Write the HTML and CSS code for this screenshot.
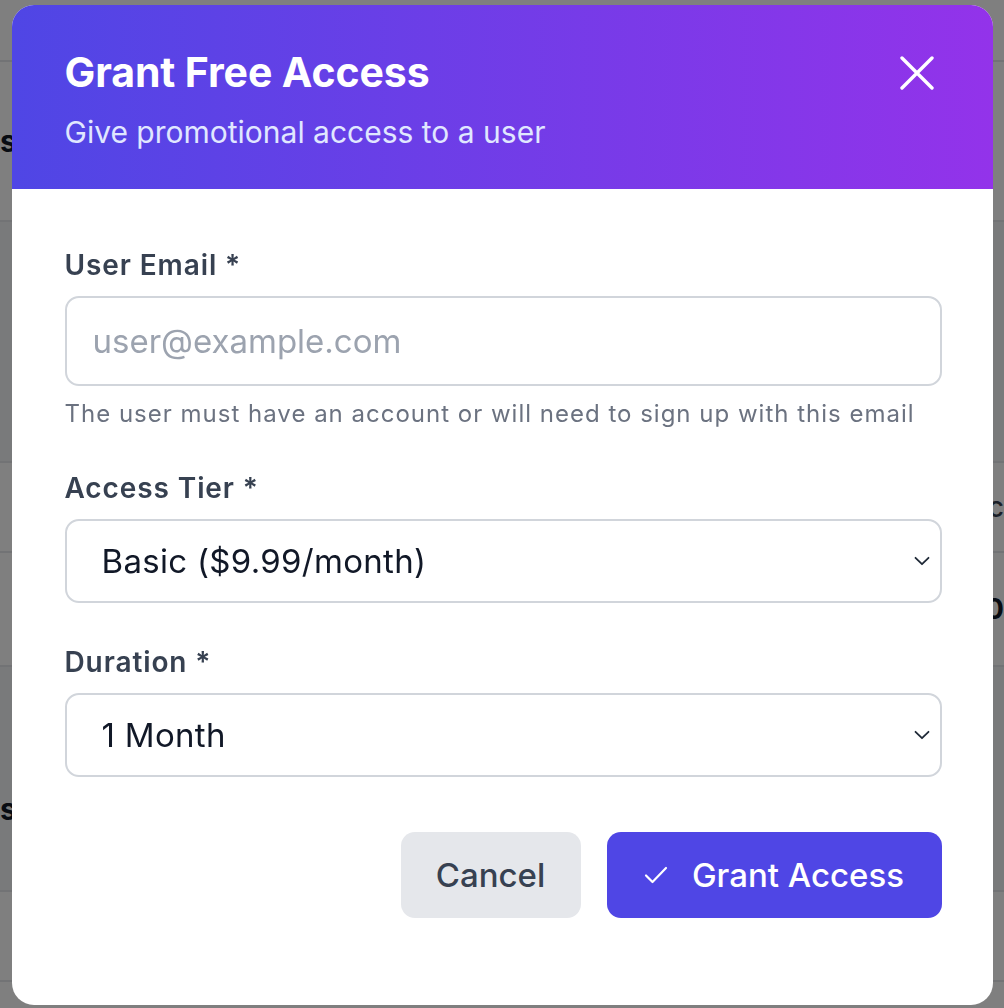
FILE: index.html
```html
<!DOCTYPE html>
<html lang="en">
<head>
<meta charset="utf-8">
<title>Grant Free Access</title>
<link rel="stylesheet" href="styles.css">
</head>
<body>
<div class="page">
  <div class="pg-top"></div>
  <div class="pg-row pg-tall"><span class="pg-l">s</span></div>
  <div class="pg-band pg-h241"></div>
  <div class="pg-row pg-h90"><span class="pg-r">c</span></div>
  <div class="pg-row pg-h114"><span class="pg-r pg-b">0</span></div>
  <div class="pg-band pg-h225"><span class="pg-l pg-lb">s</span></div>
  <div class="pg-row pg-h90"></div>
  <div class="pg-end"></div>
</div>

<div class="overlay">
  <div class="modal" role="dialog" aria-labelledby="mtitle">
    <div class="modal-head">
      <div class="head-text">
        <h2 id="mtitle" class="title">Grant Free Access</h2>
        <p class="subtitle">Give promotional access to a user</p>
      </div>
      <button class="close" aria-label="Close">
        <svg width="34" height="34" viewBox="0 0 34 34" fill="none" stroke="#fff" stroke-width="3.4" stroke-linecap="round"><path d="M2 2L32 32M32 2L2 32"/></svg>
      </button>
    </div>
    <form class="modal-body">
      <div class="field">
        <label class="label" for="email">User Email *</label>
        <input id="email" class="input" type="email" placeholder="user@example.com">
        <p class="help">The user must have an account or will need to sign up with this email</p>
      </div>
      <div class="field">
        <label class="label" for="tier">Access Tier *</label>
        <div class="select">
          <span class="select-val">Basic ($9.99/month)</span>
          <svg class="chev" width="16" height="10" viewBox="0 0 16 10" fill="none" stroke="#1f2937" stroke-width="1.8" stroke-linecap="round" stroke-linejoin="round"><path d="M1.5 1.8L8 8.2L14.5 1.8"/></svg>
        </div>
      </div>
      <div class="field">
        <label class="label" for="dur">Duration *</label>
        <div class="select">
          <span class="select-val">1 Month</span>
          <svg class="chev" width="16" height="10" viewBox="0 0 16 10" fill="none" stroke="#1f2937" stroke-width="1.8" stroke-linecap="round" stroke-linejoin="round"><path d="M1.5 1.8L8 8.2L14.5 1.8"/></svg>
        </div>
      </div>
      <div class="actions">
        <button type="button" class="btn btn-cancel">Cancel</button>
        <button type="button" class="btn btn-primary">
          <svg width="24" height="20" viewBox="0 0 24 20" fill="none" stroke="#fff" stroke-width="2.2" stroke-linecap="round" stroke-linejoin="round"><path d="M2 10.5L8.5 17L22 3"/></svg>
          <span>Grant Access</span>
        </button>
      </div>
    </form>
  </div>
</div>
</body>
</html>
```
FILE: styles.css
```css
* { box-sizing: border-box; }
html, body { margin: 0; padding: 0; }
body {
  width: 1004px;
  height: 1008px;
  overflow: hidden;
  font-family: Inter, "Noto Sans", "Liberation Sans", sans-serif;
  background: #ffffff;
}

/* underlying page (dimmed) */
.page { width: 1004px; height: 1008px; overflow: hidden; }
.pg-top { height: 62px; border-bottom: 2px solid #e5e7eb; }
.pg-row { border-bottom: 2px solid #e5e7eb; display: flex; align-items: center; justify-content: space-between; }
.pg-band { background: #f3f4f6; border-bottom: 2px solid #e5e7eb; display: flex; align-items: center; }
.pg-tall { height: 160px; }
.pg-h241 { height: 241px; }
.pg-h90 { height: 90px; }
.pg-h114 { height: 114px; }
.pg-h225 { height: 225px; }
.pg-end { height: 26px; }
.pg-l { font: 700 30px Inter, sans-serif; color: #111827; }
.pg-lb { margin-top: 60px; }
.pg-r { margin-left: auto; font: 500 28px Inter, sans-serif; color: #374151; }
.pg-b { color: #111827; font-weight: 700; }

.overlay {
  position: fixed;
  inset: 0;
  background: rgba(0, 0, 0, 0.5);
  display: flex;
  justify-content: center;
  align-items: flex-start;
  padding-top: 5px;
}

.modal {
  width: 981px;
  height: 1000px;
  background: #ffffff;
  border-radius: 22px;
  overflow: hidden;
  display: flex;
  flex-direction: column;
}

.modal-head {
  height: 184px;
  flex-shrink: 0;
  background: linear-gradient(90deg, #4f46e5 0%, #9333ea 100%);
  display: flex;
  justify-content: space-between;
  align-items: flex-start;
  padding: 43px 59px 0 53px;
}
.title {
  margin: 0;
  font-size: 41px;
  line-height: 48px;
  font-weight: 700;
  color: #ffffff;
  letter-spacing: -0.1px;
}
.subtitle {
  margin: 18px 0 0;
  font-size: 30px;
  line-height: 36px;
  color: #e0e7ff;
}
.close {
  margin-top: 8px;
  padding: 0;
  border: 0;
  background: transparent;
  width: 34px;
  height: 34px;
  display: flex;
}

.modal-body {
  margin: 0;
  padding: 58px 51px 0 53px;
  display: flex;
  flex-direction: column;
  gap: 41px;
}
.field { display: flex; flex-direction: column; }
.label {
  font-size: 28px;
  line-height: 36px;
  font-weight: 600;
  color: #374151;
  letter-spacing: 0.9px;
  margin-bottom: 13px;
}
.input {
  height: 90px;
  width: 100%;
  border: 2px solid #d1d5db;
  border-radius: 14px;
  padding: 0 26px;
  font-family: inherit;
  font-size: 33px;
  color: #111827;
  background: #fff;
  outline: none;
}
.input::placeholder { color: #9ca3af; }
.help {
  margin: 13px 0 0;
  font-size: 24px;
  line-height: 30px;
  letter-spacing: 1px;
  color: #6b7280;
}
.select {
  height: 84px;
  border: 2px solid #d1d5db;
  border-radius: 14px;
  display: flex;
  align-items: center;
  justify-content: space-between;
  padding: 0 10px 0 35px;
  background: #fff;
}
.select-val {
  font-size: 33px;
  letter-spacing: 0.3px;
  color: #111827;
}
.chev { display: block; }

.actions {
  margin-top: 14px;
  display: flex;
  justify-content: flex-end;
  gap: 26px;
}
.btn {
  height: 86px;
  border: 0;
  border-radius: 14px;
  font-family: inherit;
  font-size: 33px;
  font-weight: 500;
  display: flex;
  align-items: center;
  justify-content: center;
}
.btn-cancel {
  width: 180px;
  background: #e5e7eb;
  color: #374151;
}
.btn-primary {
  width: 335px;
  padding-left: 6px;
  background: #4f46e5;
  color: #ffffff;
  gap: 24px;
}
```
